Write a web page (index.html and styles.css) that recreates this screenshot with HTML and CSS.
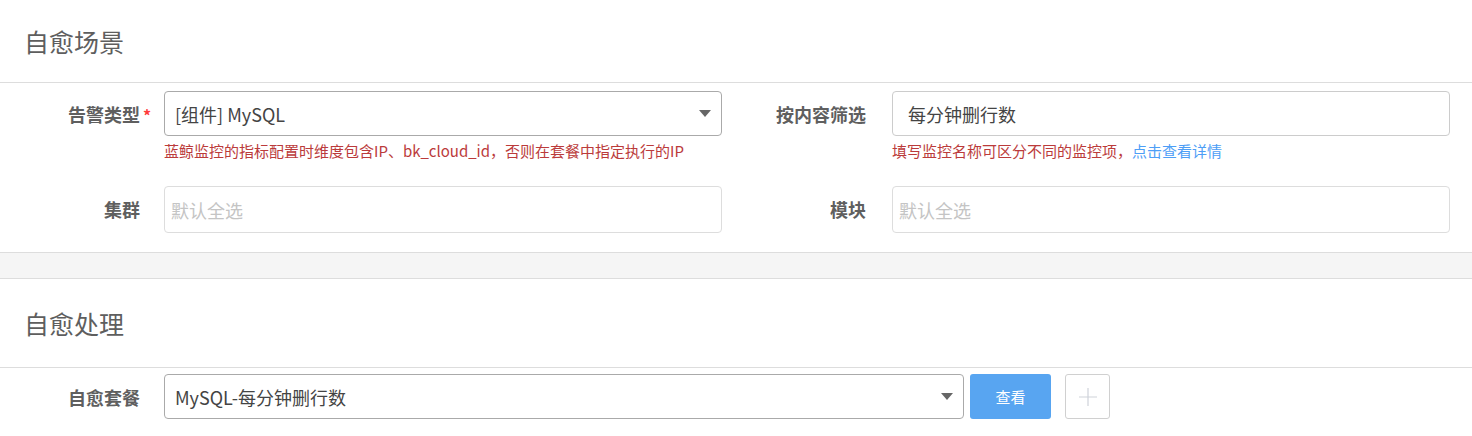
FILE: index.html
```html
<!DOCTYPE html>
<html lang="zh-CN">
<head>
<meta charset="utf-8">
<title>自愈</title>
<link rel="stylesheet" href="styles.css">
</head>
<body>
<section class="section">
  <div class="section-head head-1"><h2 class="section-title">自愈场景</h2></div>
  <div class="form-grid">
    <div class="label">告警类型<span class="req">*</span></div>
    <div class="field">
      <div class="select">
        <span class="select-value">[组件] MySQL</span>
        <span class="caret"></span>
      </div>
      <div class="help">蓝鲸监控的指标配置时维度包含IP、bk_cloud_id，否则在套餐中指定执行的IP</div>
    </div>
    <div class="label label-right">按内容筛选</div>
    <div class="field">
      <div class="input input-text">每分钟删行数</div>
      <div class="help">填写监控名称可区分不同的监控项，<a class="help-link">点击查看详情</a></div>
    </div>

    <div class="label">集群</div>
    <div class="field"><div class="input input-tags"><span class="placeholder">默认全选</span></div></div>
    <div class="label label-right">模块</div>
    <div class="field"><div class="input input-tags"><span class="placeholder">默认全选</span></div></div>
  </div>
</section>
<div class="band"></div>
<section class="section">
  <div class="section-head head-2"><h2 class="section-title">自愈处理</h2></div>
  <div class="pack-row">
    <div class="label">自愈套餐</div>
    <div class="select select-wide">
      <span class="select-value">MySQL-每分钟删行数</span>
      <span class="caret"></span>
    </div>
    <button class="btn-view">查看</button>
    <button class="btn-add" aria-label="add">
      <svg width="20" height="20" viewBox="0 0 20 20"><path d="M10 1v18M1 10h18" stroke="#cfd3da" stroke-width="1.2" fill="none"/></svg>
    </button>
  </div>
</section>
</body>
</html>
```

FILE: styles.css
```css
* { box-sizing: border-box; }
html, body { margin: 0; padding: 0; background: #fff; }
body {
  font-family: "Noto Sans CJK SC", "Noto Sans", sans-serif;
  color: #444;
  width: 1472px;
}
.section-head {
  display: flex;
  align-items: center;
  padding-left: 24px;
  border-bottom: 1px solid #dddddd;
}
.head-1 { height: 83px; }
.head-2 { height: 89px; }
.section-title {
  margin: 0;
  font-size: 25px;
  font-weight: 400;
  line-height: 1;
  color: #5e5e5e;
}
.form-grid {
  display: grid;
  grid-template-columns: 164px 558px 170px 558px;
  grid-auto-rows: auto;
  row-gap: 0;
  padding-top: 8px;
  padding-bottom: 19px;
}
.label {
  height: 45px;
  display: flex;
  align-items: center;
  justify-content: flex-end;
  padding-right: 24px;
  font-size: 18px;
  font-weight: 700;
  color: #5f5f5f;
  position: relative;
  white-space: nowrap;
}
.label-right { padding-right: 26px; }
.req {
  position: absolute;
  right: 13px;
  top: 12px;
  color: #ff3c3c;
  font-size: 16px;
  font-weight: 700;
}
.field { display: flex; flex-direction: column; }
.select {
  height: 45px;
  border: 1px solid #aaaaaa;
  border-radius: 4px;
  display: flex;
  align-items: center;
  padding: 0 10px;
  font-size: 18px;
  color: #444;
}
.select-value { flex: 1; }
.caret {
  width: 0; height: 0;
  border-left: 6px solid transparent;
  border-right: 6px solid transparent;
  border-top: 7px solid #666;
}
.input {
  height: 45px;
  border: 1px solid #cccccc;
  border-radius: 4px;
  display: flex;
  align-items: center;
  font-size: 18px;
  color: #444;
}
.input-text { padding: 0 15px; }
.input-tags { height: 47px; border-color: #dddddd; padding: 0 6px; }
.placeholder { color: #c4c4c4; }
.help {
  margin-top: 5px;
  margin-bottom: 25px;
  font-size: 15px;
  line-height: 20px;
  color: #bb3b3b;
  white-space: nowrap;
}
.help-link { color: #4d9ef6; cursor: pointer; }
.band {
  height: 27px;
  background: #f5f5f5;
  border-top: 1px solid #dddddd;
  border-bottom: 1px solid #dddddd;
}
.pack-row {
  display: flex;
  align-items: flex-start;
  padding-top: 6px;
  height: 60px;
}
.pack-row .label { width: 164px; height: 45px; }
.select-wide { width: 800px; }
.btn-view {
  margin-left: 6px;
  width: 81px;
  height: 45px;
  border: none;
  border-radius: 3px;
  background: #58a5f1;
  color: #fff;
  font-family: inherit;
  font-size: 15px;
}
.btn-add {
  margin-left: 14px;
  width: 45px;
  height: 45px;
  border: 1px solid #d0d0d0;
  border-radius: 3px;
  background: #fff;
  display: flex;
  align-items: center;
  justify-content: center;
  padding: 0;
}
.btn-add svg { display: block; }
```
